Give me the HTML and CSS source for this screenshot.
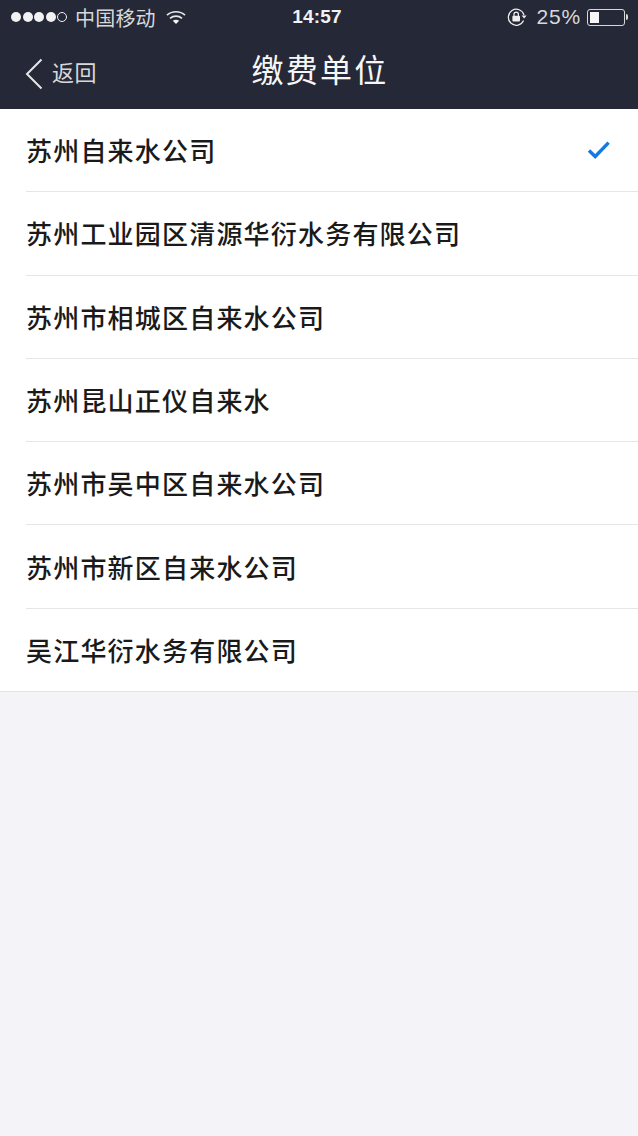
FILE: index.html
```html
<!DOCTYPE html>
<html lang="zh-CN">

<head>
    <meta charset="UTF-8">
    <meta name="viewport" content="width=device-width, initial-scale=1.0">
    <title>缴费单位</title>
    <link rel="stylesheet" href="styles.css">
</head>

<body>
    <header class="topbar">
        <div class="statusbar">
            <div class="status-left">
                <span class="signal">
                    <i class="dot"></i><i class="dot"></i><i class="dot"></i><i class="dot"></i><i class="dot empty"></i>
                </span>
                <span class="carrier">中国移动</span>
                <svg class="wifi" width="20" height="15" viewBox="0 0 20 15">
                    <path d="M1 5.2C6 .6 14 .6 19 5.2" fill="none" stroke="#e8e8ea" stroke-width="1.7" />
                    <path d="M4 8.3c3.4-3 8.6-3 12 0" fill="none" stroke="#e8e8ea" stroke-width="1.7" />
                    <path d="M6.8 10.8c1.8-1.5 4.6-1.5 6.4 0L10 14z" fill="#f4f4f5" />
                </svg>
            </div>
            <div class="clock">14:57</div>
            <div class="status-right">
                <svg class="lock" width="21" height="18" viewBox="0 0 21 18">
                    <path d="M16.6 12.6A8 8 0 1 1 17 7" fill="none" stroke="#eeeeef" stroke-width="1.2" />
                    <path d="M14.6 7.6h5l-2.5 3z" fill="#eeeeef" />
                    <rect x="5.4" y="7.8" width="7.6" height="5.6" rx="1" fill="#eeeeef" />
                    <path d="M7 8V6.4a2.2 2.2 0 0 1 4.4 0V8" fill="none" stroke="#eeeeef" stroke-width="1.2" />
                </svg>
                <span class="percent">25%</span>
                <span class="battery"><span class="battery-level"></span></span>
                <span class="battery-tip"></span>
            </div>
        </div>
        <nav class="navbar">
            <a class="back">
                <svg width="18" height="32" viewBox="0 0 18 32">
                    <path d="M16.5 1.5L2 16l14.5 14.5" fill="none" stroke="#e6e6e8" stroke-width="2" />
                </svg>
                <span class="back-label">返回</span>
            </a>
            <h1 class="title">缴费单位</h1>
        </nav>
    </header>

    <ul class="company-list">
        <li class="company selected">
            <span class="company-name">苏州自来水公司</span>
            <svg class="check" width="24" height="20" viewBox="0 0 24 20">
                <path d="M2 10.5l6.2 6L21.6 2.6" fill="none" stroke="#1479e8" stroke-width="3.4" />
            </svg>
        </li>
        <li class="company"><span class="company-name">苏州工业园区清源华衍水务有限公司</span></li>
        <li class="company"><span class="company-name">苏州市相城区自来水公司</span></li>
        <li class="company"><span class="company-name">苏州昆山正仪自来水</span></li>
        <li class="company"><span class="company-name">苏州市吴中区自来水公司</span></li>
        <li class="company"><span class="company-name">苏州市新区自来水公司</span></li>
        <li class="company"><span class="company-name">吴江华衍水务有限公司</span></li>
    </ul>
</body>

</html>
```

FILE: styles.css
```css
body {
    margin: 0;
    height: 1136px;
    overflow: hidden;
    background-color: #f3f3f8;
    font-family: "Liberation Sans", "Noto Sans CJK SC", sans-serif;
}

.topbar {
    height: 109px;
    background-color: #252836;
    color: #f2f2f3;
}

.statusbar {
    display: grid;
    grid-template-columns: 1fr auto 1fr;
    align-items: center;
    box-sizing: border-box;
    height: 36px;
    padding: 0 10px 2px 11px;
}

.status-left,
.status-right {
    display: flex;
    align-items: center;
}

.status-right {
    justify-content: flex-end;
}

.signal {
    display: flex;
    gap: 1.5px;
    margin-right: 8px;
}

.dot {
    width: 10px;
    height: 10px;
    border-radius: 50%;
    background-color: #f2f2f3;
    box-sizing: border-box;
}

.dot.empty {
    background: none;
    border: 1px solid #f2f2f3;
}

.carrier {
    font-size: 20px;
    letter-spacing: 0.2px;
    color: #d8d8db;
}

.wifi {
    margin-left: 10px;
}

.clock {
    margin-right: 5px;
    font-size: 19px;
    font-weight: bold;
    letter-spacing: 0.2px;
}

.lock {
    margin-right: 9px;
}

.percent {
    font-size: 21px;
    letter-spacing: 0.8px;
    color: #d8d8db;
    margin-right: 6px;
}

.battery {
    display: block;
    box-sizing: border-box;
    width: 38px;
    height: 17px;
    padding: 2px;
    border: 1px solid #d8d8db;
    border-radius: 3px;
}

.battery-level {
    display: block;
    width: 9px;
    height: 100%;
    background-color: #f6f6f6;
}

.battery-tip {
    width: 2px;
    height: 6px;
    margin-left: 1px;
    border-radius: 0 2px 2px 0;
    background-color: #d8d8db;
}

.navbar {
    position: relative;
    display: flex;
    align-items: center;
    justify-content: center;
    height: 69px;
}

.back {
    position: absolute;
    left: 25px;
    top: 19px;
    display: flex;
    align-items: center;
    gap: 9px;
    font-size: 22px;
    color: #d8d8db;
}

.back-label {
    margin-bottom: 5px;
    letter-spacing: 0.5px;
}

.title {
    margin: 0 0 5px;
    padding-left: 2px;
    font-size: 32px;
    font-weight: normal;
    letter-spacing: 2.2px;
    color: #f6f6f7;
}

.company-list {
    margin: 0;
    padding: 0;
    list-style: none;
    background-color: #fff;
    border-bottom: 1px solid #e2e2e4;
}

.company {
    display: flex;
    align-items: center;
    justify-content: space-between;
    box-sizing: border-box;
    height: 83.3px;
    margin-left: 26px;
    padding-right: 27px;
    border-bottom: 1px solid #e6e6e8;
}

.company:last-child {
    height: 82.3px;
    border-bottom: none;
}

.company-name {
    margin-bottom: 1px;
    font-size: 26px;
    font-weight: 500;
    letter-spacing: 1.2px;
    color: #1a1a1a;
}
```
